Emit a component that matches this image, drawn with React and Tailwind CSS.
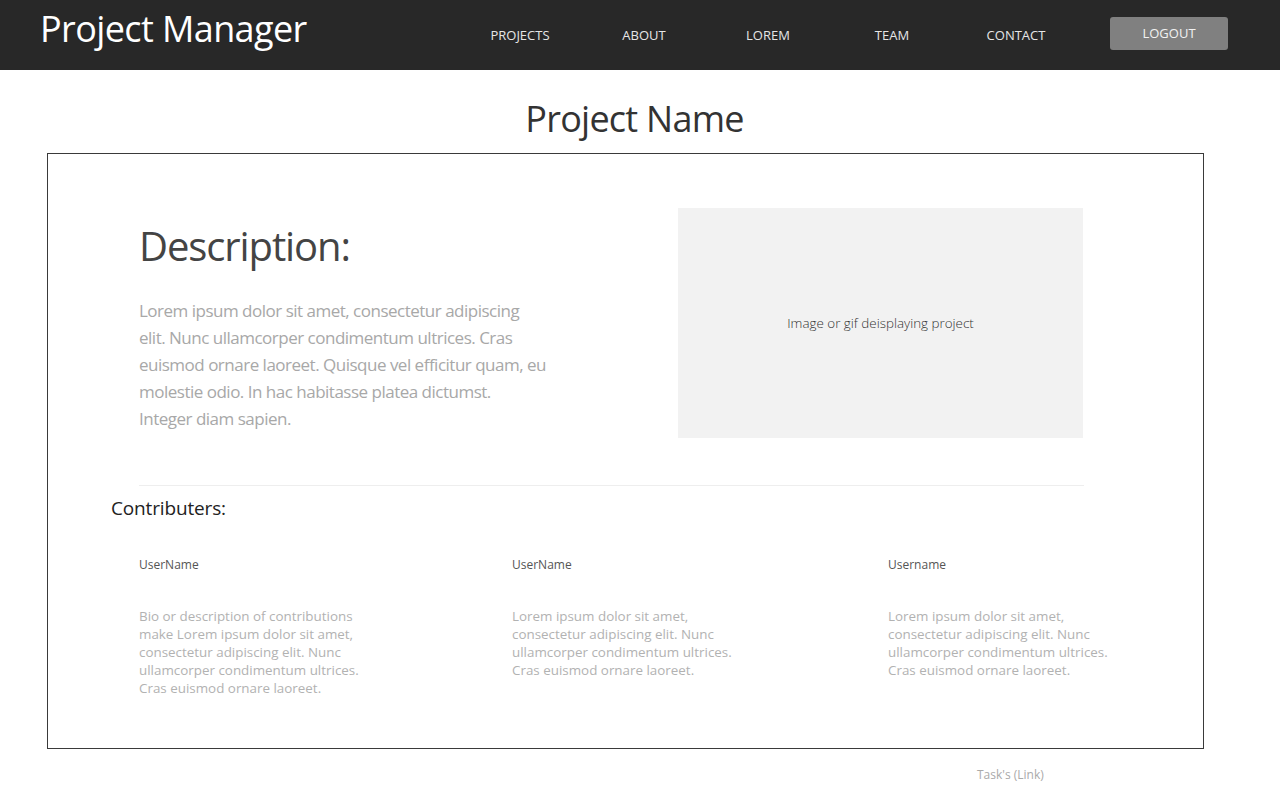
import React from 'react';

const navItems = ['PROJECTS', 'ABOUT', 'LOREM', 'TEAM', 'CONTACT'];

const contributors = [
    {
        name: 'UserName',
        bio: 'Bio or description of contributions make Lorem ipsum dolor sit amet, consectetur adipiscing elit. Nunc ullamcorper condimentum ultrices. Cras euismod ornare laoreet.',
        width: 'w-[373px]',
    },
    {
        name: 'UserName',
        bio: 'Lorem ipsum dolor sit amet, consectetur adipiscing elit. Nunc ullamcorper condimentum ultrices. Cras euismod ornare laoreet.',
        width: 'w-[376px]',
    },
    {
        name: 'Username',
        bio: 'Lorem ipsum dolor sit amet, consectetur adipiscing elit. Nunc ullamcorper condimentum ultrices. Cras euismod ornare laoreet.',
        width: 'w-[300px]',
    },
];

export default function App() {
    return (
        <div className="min-h-[800px] bg-white font-['Open_Sans',_'Liberation_Sans',_sans-serif]">
            {/* Top bar */}
            <header className="flex h-[70px] items-center bg-[#282828] pl-[40px]">
                <div className="-mt-[12px] w-[418px] text-[36px] leading-[44px] tracking-[-0.6px] text-white">Project Manager</div>
                <nav className="flex">
                    {navItems.map((item) => (
                        <a key={item} className="w-[124px] text-center text-[13px] leading-[18px] text-[#e6e6e6]">
                            {item}
                        </a>
                    ))}
                </nav>
                <button className="ml-[32px] -mt-[3px] h-[33px] w-[118px] rounded-[3px] bg-[#808080] text-[13px] text-[#f2f2f2]">
                    LOGOUT
                </button>
            </header>

            <main className="pl-[47px]">
                <h1 className="mt-[27px] mb-[12px] w-[1157px] pl-[18px] text-center text-[36px] leading-[44px] tracking-[-0.75px] text-[#333]">
                    Project Name
                </h1>

                {/* Project card */}
                <section className="w-[1157px] border border-[#3a3a3a]">
                    <div className="flex pt-[54px]">
                        <div className="w-[630px] pl-[91px] pt-[14px]">
                            <h2 className="text-[40px] leading-[48px] tracking-[-1.1px] text-[#444]">Description:</h2>
                            <p className="mt-[27px] w-[440px] text-[17px] leading-[27px] tracking-[-0.5px] text-[#a8a8a8]">
                                Lorem ipsum dolor sit amet, consectetur adipiscing
                                <br />
                                elit. Nunc ullamcorper condimentum ultrices. Cras
                                <br />
                                euismod ornare laoreet. Quisque vel efficitur quam, eu
                                <br />
                                molestie odio. In hac habitasse platea dictumst.
                                <br />
                                Integer diam sapien.
                            </p>
                        </div>
                        <div className="flex h-[230px] w-[405px] items-center justify-center bg-[#f2f2f2] pt-[1px]">
                            <span className="text-[13.4px] font-light text-[#333]">Image or gif deisplaying project</span>
                        </div>
                    </div>

                    <div className="mt-[47px] ml-[91px] h-px w-[945px] bg-[#eeeeee]"></div>

                    <h3 className="mt-[9px] ml-[63px] text-[19px] leading-[26px] tracking-[-0.15px] text-[#222]">Contributers:</h3>

                    <div className="flex pl-[91px] pb-[51px]">
                        {contributors.map((c, i) => (
                            <div key={i} className={c.width}>
                                <div className="mt-[36px] text-[12px] leading-[16px] text-[#555]">{c.name}</div>
                                <p className="mt-[34px] w-[232px] text-[13.4px] leading-[18px] text-[#b2b2b2]">{c.bio}</p>
                            </div>
                        ))}
                    </div>
                </section>

                <a className="mt-[18px] ml-[930px] block text-[12px] leading-[16px] text-[#aaa]">Task's (Link)</a>
            </main>
        </div>
    );
}
